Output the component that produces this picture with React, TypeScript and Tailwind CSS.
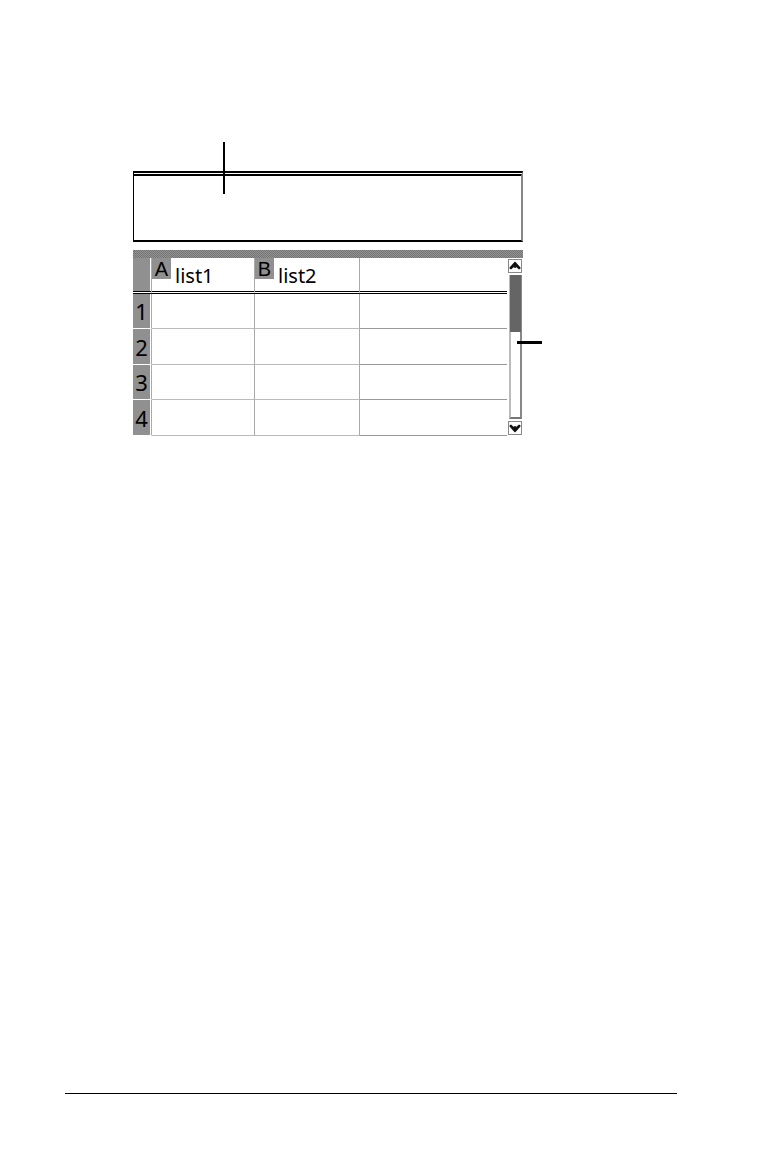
import { clsx } from "clsx";

const COLUMNS = [
  { letter: "A", name: "list1" },
  { letter: "B", name: "list2" },
];

const ROWS = [1, 2, 3, 4];

function ScrollButton({ direction }: { direction: "up" | "down" }) {
  return (
    <button
      type="button"
      aria-label={`Scroll ${direction}`}
      className="flex h-[14px] w-[14px] items-center justify-center border border-[#888] bg-white"
    >
      <svg viewBox="0 0 12 12" className={clsx("h-3 w-3 shrink-0", direction === "down" && "rotate-180")}>
        <path d="M6 1.5L7.5 3L11.5 7.5V8.5L10 9.5L6.8 6.8V8H5.2V6.8L2 9.5L0.5 8.5V7.5L4.5 3Z" fill="#111" />
      </svg>
    </button>
  );
}

function ScrollBar() {
  return (
    <div className="flex w-4 shrink-0 flex-col items-start justify-between py-px pl-px">
      <ScrollButton direction="up" />
      {/* Track with the thumb at its top */}
      <div className="my-[2px] ml-px flex w-[13px] flex-1 flex-col border-r-2 border-b-2 border-l-2 border-r-[#888] border-b-[#777] border-l-[#bbb]">
        <div className="-mx-px h-[57px] bg-[#656565]" />
      </div>
      <ScrollButton direction="down" />
    </div>
  );
}

function Spreadsheet() {
  return (
    <table className="flex-1 table-fixed border-separate border-spacing-0 font-['Noto_Sans',sans-serif] text-xl leading-6 text-black">
      <colgroup>
        <col className="w-[19px]" />
        <col className="w-[103px]" />
        <col className="w-[105px]" />
        <col />
      </colgroup>
      <thead>
        <tr className="h-9">
          <td className="border-r border-b-[3px] border-double border-r-[#aaa] border-b-black bg-[#909090] bg-clip-content p-0 pr-px" />
          {COLUMNS.map((column) => (
            <th
              key={column.letter}
              scope="col"
              className="border-r border-b-[3px] border-double border-r-[#aaa] border-b-black p-0 text-left font-normal"
            >
              <div className="flex h-[33px] items-start gap-1">
                <span className="flex h-[21px] w-[19px] items-center justify-center bg-[#909090] font-['Liberation_Sans',sans-serif]">
                  {column.letter}
                </span>
                <span className="pt-[6px]">{column.name}</span>
              </div>
            </th>
          ))}
          <td className="border-b-[3px] border-double border-black p-0" />
        </tr>
      </thead>
      <tbody>
        {ROWS.map((row) => (
          <tr key={row} className={row % 2 === 0 ? "h-9" : "h-[35px]"}>
            <th
              scope="row"
              className="border-r border-b border-r-[#aaa] border-b-white bg-[#909090] bg-clip-content p-0 pr-px text-center text-[22px] font-normal"
            >
              {row}
            </th>
            <td className="border-r border-b border-[#aaa] border-b-[#bbb] p-0" />
            <td className="border-r border-b border-[#aaa] border-b-[#bbb] p-0" />
            <td className="border-b border-[#999] p-0" />
          </tr>
        ))}
      </tbody>
    </table>
  );
}

export default function App() {
  return (
    <div className="flex min-h-screen flex-col bg-white">
      <main className="flex-1 pt-[171px] pr-[241px] pl-[133px]">
        {/* Work area */}
        <div className="relative h-[71px] border-t-[5px] border-r-2 border-b-2 border-l border-black border-r-[#888] bg-white [border-top-style:double]">
          <div className="absolute -top-[34px] left-[89px] h-[52px] w-[2px] bg-black" />
        </div>

        <div className="relative mt-2">
          {/* Hatched title strip */}
          <div className="h-2 bg-[conic-gradient(#747474_25%,#929292_0_50%,#747474_0_75%,#929292_0)] bg-[length:2px_2px]" />
          <div className="flex">
            <Spreadsheet />
            <ScrollBar />
          </div>
          <div className="absolute top-[91px] -right-[19px] h-[3px] w-[25px] bg-black" />
        </div>
      </main>

      <footer className="mr-[87px] mb-[66px] ml-[65px] border-t border-black" />
    </div>
  );
}
